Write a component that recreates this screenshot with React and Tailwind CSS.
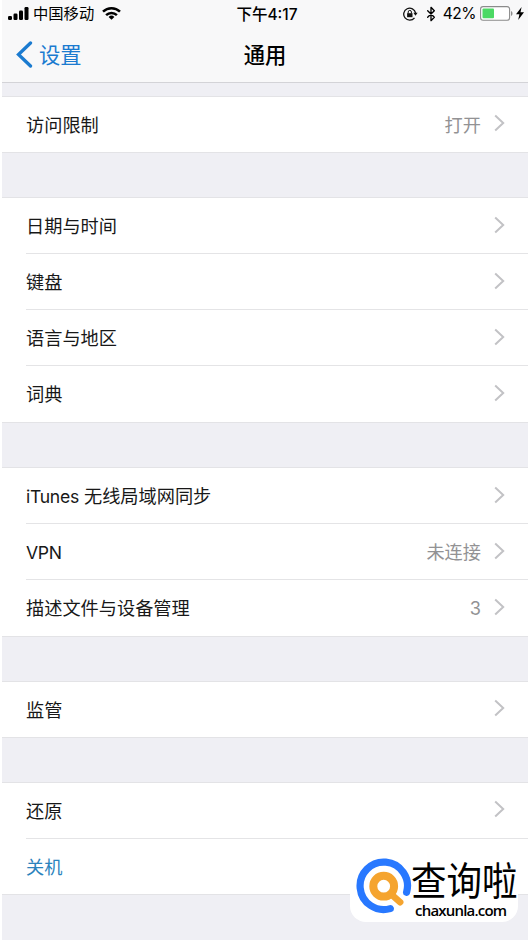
import { Bluetooth } from 'lucide-react';

const sections = [
  { height: 'h-[55px]', gap: 'mb-[46px]', rows: [{ label: '访问限制', value: '打开' }] },
  {
    height: 'h-[224px]',
    gap: 'mb-[46px]',
    rows: [{ label: '日期与时间' }, { label: '键盘' }, { label: '语言与地区' }, { label: '词典' }],
  },
  {
    height: 'h-[168px]',
    gap: 'mb-[46px]',
    rows: [
      { label: 'iTunes 无线局域网同步' },
      { label: 'VPN', value: '未连接' },
      { label: '描述文件与设备管理', value: '3' },
    ],
  },
  { height: 'h-[55px]', gap: 'mb-[46px]', rows: [{ label: '监管' }] },
  { height: 'h-[111px]', gap: '', rows: [{ label: '还原' }, { label: '关机', link: true }] },
];

const StatusBar = () => (
  <div className="grid h-[27px] grid-cols-[1fr_auto_1fr] items-center text-[15.3px] leading-none text-black">
    <div className="flex items-center pl-[8px]">
      <svg width="21" height="13" viewBox="0 0 21 13">
        <rect x="0" y="9" width="4" height="4" rx="1.2" />
        <rect x="5.5" y="6.5" width="4" height="6.5" rx="1.2" />
        <rect x="11" y="3.5" width="4" height="9.5" rx="1.2" />
        <rect x="16.5" y="0" width="4" height="13" rx="1.2" />
      </svg>
      <span className="ml-[4px] pt-px">中国移动</span>
      <svg className="ml-[8px]" width="19" height="13" viewBox="0 0 19 13" fill="none" stroke="#000" strokeWidth="2.5">
        <path d="M1 4.7a12.2 12.2 0 0 1 17 0" />
        <path d="M4.1 8.1a7.7 7.7 0 0 1 10.8 0" />
        <path d="M9.5 12.7 6.6 9.9a4.2 4.2 0 0 1 5.8 0z" fill="#000" stroke="none" />
      </svg>
    </div>
    <div className="pt-[2px] pl-[4px] text-[15.5px] font-medium">下午4:17</div>
    <div className="flex items-center justify-end pr-[6px]">
      <svg width="15" height="14" viewBox="0 0 15 14" fill="none" stroke="#111">
        <path d="M11.5 10.8A6 6 0 1 1 12.6 6" strokeWidth="1.3" />
        <path d="M10.4 5.7h4.2l-2.1 3z" fill="#111" stroke="none" />
        <rect x="4.1" y="6.2" width="5.4" height="4" fill="#111" stroke="none" />
        <path d="M5.2 6.5V5a1.6 1.6 0 0 1 3.2 0v1.5" strokeWidth="1" />
      </svg>
      <Bluetooth className="ml-[5px]" size={16} strokeWidth={2} />
      <span className="ml-[4px] pt-[1px] text-[15.5px] tracking-[-0.5px]">42%</span>
      <svg className="ml-[4px]" width="33" height="15" viewBox="0 0 33 15">
        <rect x="0.6" y="0.6" width="29" height="13.6" rx="2.5" fill="#fff" stroke="#8b8b8b" strokeWidth="1.1" />
        <rect x="2.5" y="2.5" width="11.5" height="9.8" rx="1" fill="#4cd964" />
        <path d="M31 5c2 .7 2 4.3 0 5z" fill="#8b8b8b" />
      </svg>
      <svg className="ml-[3px]" width="8" height="13" viewBox="0 0 8 13">
        <path d="M5.6 0 0 7.2h3.4L2.2 13 8 5.2H4.5z" />
      </svg>
    </div>
  </div>
);

const NavBar = () => (
  <div className="grid h-[54px] grid-cols-[1fr_auto_1fr] items-center text-[21.3px] leading-none">
    <div className="flex items-center pl-[16px] text-[#1b7bd0]">
      <svg width="17" height="27" viewBox="0 0 17 27" fill="none" stroke="currentColor" strokeWidth="3.3" strokeLinecap="round">
        <path d="M14.5 2 2.5 13.5l12 11.5" />
      </svg>
      <span className="ml-[6px] pt-[3px]">设置</span>
    </div>
    <h1 className="pt-[3px] font-medium text-black">通用</h1>
  </div>
);

const Row = ({ label, value, link }) => (
  <div className="group flex min-h-0 flex-1 pl-[26px]">
    <div className="flex flex-1 items-center border-b border-[#e4e4e6] pt-[2px] pr-[25px] text-[18.2px] leading-none group-last:border-transparent">
      <span className={link ? 'flex-1 text-[#2b83bd]' : 'flex-1 text-[#181818]'}>
        {label.split(/([A-Za-z]+)/).map((part, i) =>
          i % 2 ? <span key={i} className="text-[17.6px] tracking-[-0.3px]">{part}</span> : part
        )}
      </span>
      {value && <span className="mr-[13px] text-[#929294]">{value}</span>}
      {!link && (
        <svg className="mb-[4px]" width="11" height="18" viewBox="0 0 11 18" fill="none" stroke="#c2c2c5" strokeWidth="2">
          <path d="m1.2 1.5 8 7.5-8 7.5" />
        </svg>
      )}
    </div>
  </div>
);

const Watermark = () => (
  <div className="absolute top-[846px] left-[348px] flex h-[76px] w-[168px] rounded-b-[16px] bg-white">
    <svg className="mt-[12px] ml-[5px] shrink-0" width="57" height="57" viewBox="0 0 57 57" fill="none" strokeLinecap="round">
      <path d="M51.6 34.2A23.7 23.7 0 1 0 35.3 50.6" stroke="#2878ff" strokeWidth="7.2" />
      <circle cx="28.7" cy="28.2" r="10.4" stroke="#f5a42f" strokeWidth="8" />
      <path d="m37 37 8.2 7.2" stroke="#f5a42f" strokeWidth="6.5" />
    </svg>
    <div className="mt-[16px] ml-[-1px] whitespace-nowrap text-black">
      <div className="flex h-[36px] origin-top scale-y-[1.1] items-center text-[35.5px] leading-none">查询啦</div>
      <div className="mt-[4px] ml-[4px] font-['Open_Sans','Noto_Sans',sans-serif] text-[15px] leading-[16px] font-semibold tracking-[-0.8px]">chaxunla.com</div>
    </div>
  </div>
);

const App = () => (
  <div className="relative h-[942px] w-[530px] overflow-hidden border-2 border-t-0 border-white bg-[#efeff4] font-['Inter','Noto_Sans_CJK_SC',sans-serif]">
    <header className="mx-[-2px] h-[83px] border-b border-[#d3d3d7] bg-[#f8f8f9]">
      <StatusBar />
      <NavBar />
    </header>
    <main className="mx-[-2px] pt-[14px]">
      {sections.map((section) => (
        <section
          key={section.rows[0].label}
          className={`${section.height} ${section.gap} flex flex-col bg-white shadow-[0_0_0_1px_#e3e3e6]`}
        >
          {section.rows.map((row) => (
            <Row key={row.label} {...row} />
          ))}
        </section>
      ))}
    </main>
    <Watermark />
  </div>
);

export default App;
